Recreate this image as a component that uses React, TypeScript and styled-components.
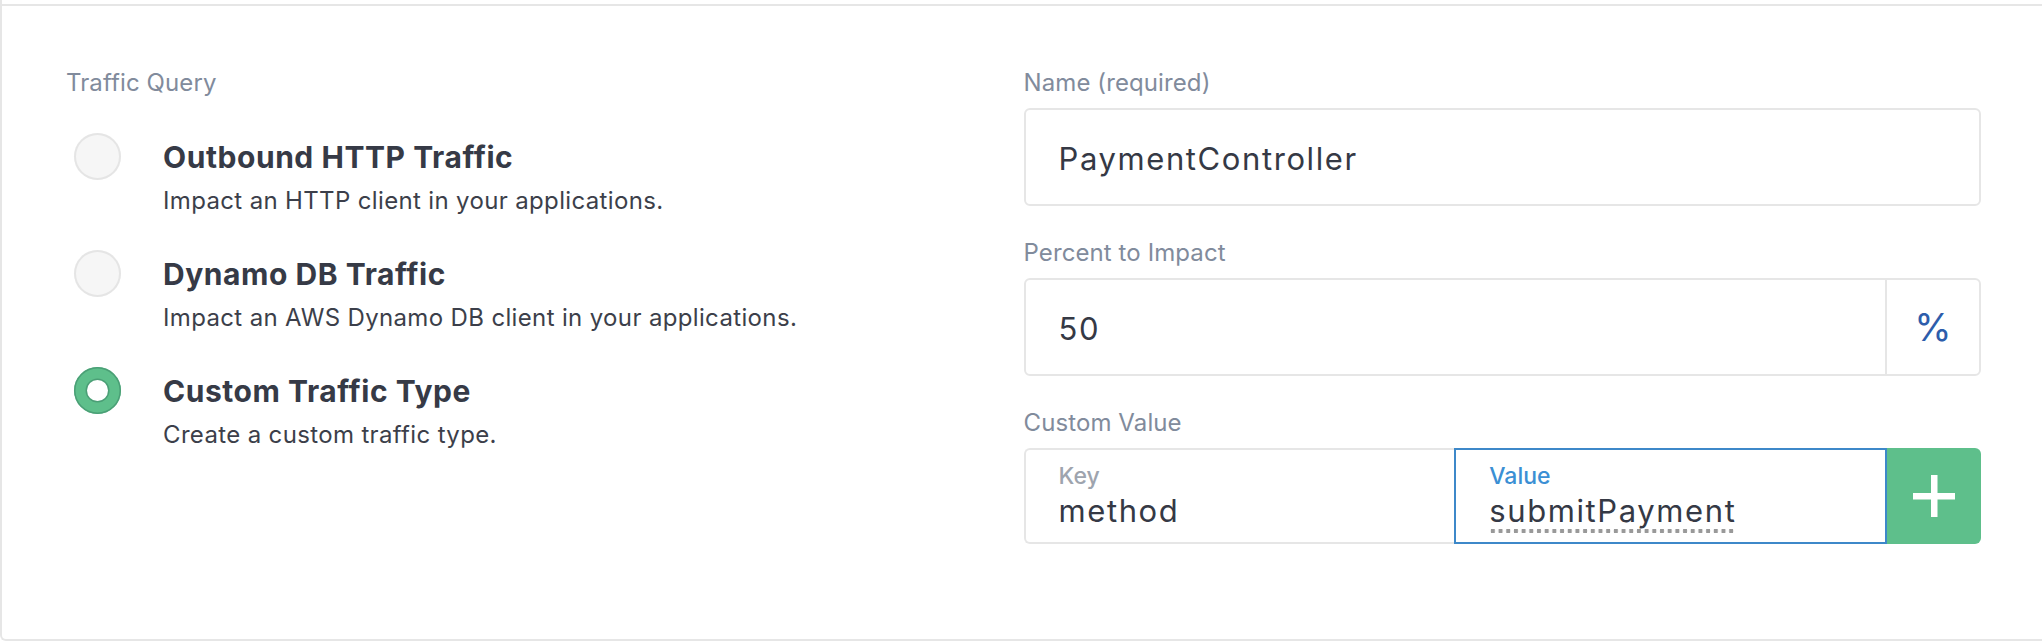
import React from "react";
import styled, { createGlobalStyle } from "styled-components";

const GlobalStyle = createGlobalStyle`
  html, body {
    margin: 0;
    padding: 0;
    background: #ffffff;
    overflow: hidden;
  }
  body {
    font-family: Inter, "Noto Sans", "Liberation Sans", sans-serif;
    color: #363a46;
  }
  * { box-sizing: border-box; }
`;

const Card = styled.div`
  height: 641px;
  padding-top: 4px;
  border-left: 2px solid #e6e6e6;
  border-bottom: 2px solid #e6e6e6;
  border-bottom-left-radius: 6px;
`;

const Section = styled.section`
  border-top: 2px solid #e6e6e6;
  display: grid;
  grid-template-columns: 1fr 1fr;
  padding: 62px 61px 0 64px;
`;

const Column = styled.div`
  display: flex;
  flex-direction: column;
`;

const FieldLabel = styled.div`
  font-size: 24px;
  line-height: 30px;
  color: #818b9c;
  font-weight: 400;
  letter-spacing: 0.1px;
`;

const OptionList = styled.div`
  display: flex;
  flex-direction: column;
  gap: 34px;
  margin-top: 35px;
  padding-left: 8px;
`;

const Option = styled.div`
  display: flex;
  align-items: flex-start;
  gap: 42px;
`;

const Radio = styled.div<{ $checked?: boolean }>`
  flex: none;
  width: 47px;
  height: 47px;
  border-radius: 50%;
  display: flex;
  align-items: center;
  justify-content: center;
  background: ${(p) => (p.$checked ? "#5ebf8b" : "#f6f6f6")};
  box-shadow: inset 0 0 0 ${(p) => (p.$checked ? "1.5px #4b9f76" : "2px #e5e5e5")};
  &::after {
    content: "";
    display: ${(p) => (p.$checked ? "block" : "none")};
    width: 21px;
    height: 21px;
    border-radius: 50%;
    background: #ffffff;
    box-shadow: 0 0 0 1.5px #4b9f76;
  }
`;

const OptionText = styled.div`
  display: flex;
  flex-direction: column;
`;

const OptionTitle = styled.div`
  font-size: 30px;
  line-height: 47px;
  padding-top: 1px;
  font-weight: 700;
  letter-spacing: 0.55px;
  color: #363a46;
`;

const OptionDesc = styled.div`
  margin-top: 5px;
  font-size: 24px;
  line-height: 30px;
  letter-spacing: 0.35px;
  color: #3c3f4a;
`;

const FieldGroup = styled.div`
  display: flex;
  flex-direction: column;
  gap: 10px;
  & + & {
    margin-top: 32px;
  }
`;

const InputBox = styled.div`
  display: flex;
  height: 98px;
  border: 2px solid #e6e6e6;
  border-radius: 6px;
  background: #ffffff;
`;

const InputText = styled.div`
  flex: 1;
  display: flex;
  align-items: center;
  padding: 3px 33px 0;
  font-size: 31px;
  line-height: 36px;
  letter-spacing: 1.6px;
  color: #353945;
`;

const Addon = styled.div`
  flex: none;
  width: 94px;
  display: flex;
  align-items: center;
  justify-content: center;
  border-left: 2px solid #e6e6e6;
  font-size: 38px;
  color: #2d5dab;
`;

const KVRow = styled.div`
  display: flex;
  height: 96px;
`;

const KVCell = styled.div<{ $focused?: boolean; $first?: boolean }>`
  flex: 1;
  display: flex;
  flex-direction: column;
  padding: 12px 33px 0;
  border: 2px solid ${(p) => (p.$focused ? "#3d88c9" : "#e6e6e6")};
  border-right: ${(p) => (p.$first ? "none" : undefined)};
  border-radius: ${(p) => (p.$first ? "6px 0 0 6px" : "0")};
`;

const CellLabel = styled.div<{ $focused?: boolean }>`
  font-size: 23px;
  line-height: 28px;
  font-weight: 500;
  color: ${(p) => (p.$focused ? "#3b8fd4" : "#9ea4ae")};
`;

const CellValue = styled.div`
  margin-top: 3px;
  height: 36px;
  font-size: 31px;
  line-height: 36px;
  letter-spacing: 1.6px;
  color: #353945;
`;

const Misspelled = styled.span`
  display: inline-block;
  padding-bottom: 7px;
  margin-bottom: -7px;
  background-image: radial-gradient(circle at 50% 50%, #999999 0, #999999 2.1px, transparent 2.5px);
  background-size: 7.7px 6px;
  background-repeat: repeat-x;
  background-position: 0 35px;
`;

const AddButton = styled.button`
  flex: none;
  width: 94px;
  border: none;
  padding: 0;
  margin: 0;
  background: #5ebf8b;
  border-radius: 0 6px 6px 0;
  display: flex;
  align-items: center;
  justify-content: center;
  cursor: pointer;
`;

const PlusIcon = () => (
  <svg width="42" height="42" viewBox="0 0 42 42" aria-hidden="true">
    <rect x="0" y="18" width="42" height="6.5" fill="#ffffff" />
    <rect x="18" y="0" width="6.5" height="42" fill="#ffffff" />
  </svg>
);

const options = [
  { title: "Outbound HTTP Traffic", desc: "Impact an HTTP client in your applications.", checked: false },
  { title: "Dynamo DB Traffic", desc: "Impact an AWS Dynamo DB client in your applications.", checked: false },
  { title: "Custom Traffic Type", desc: "Create a custom traffic type.", checked: true },
];

export default function App() {
  return (
    <>
      <GlobalStyle />
      <Card>
        <Section>
          <Column>
            <FieldLabel>Traffic Query</FieldLabel>
            <OptionList>
              {options.map((o) => (
                <Option key={o.title}>
                  <Radio $checked={o.checked} />
                  <OptionText>
                    <OptionTitle>{o.title}</OptionTitle>
                    <OptionDesc>{o.desc}</OptionDesc>
                  </OptionText>
                </Option>
              ))}
            </OptionList>
          </Column>
          <Column>
            <FieldGroup>
              <FieldLabel>Name (required)</FieldLabel>
              <InputBox>
                <InputText>PaymentController</InputText>
              </InputBox>
            </FieldGroup>
            <FieldGroup>
              <FieldLabel>Percent to Impact</FieldLabel>
              <InputBox>
                <InputText>50</InputText>
                <Addon>%</Addon>
              </InputBox>
            </FieldGroup>
            <FieldGroup>
              <FieldLabel>Custom Value</FieldLabel>
              <KVRow>
                <KVCell $first>
                  <CellLabel>Key</CellLabel>
                  <CellValue>method</CellValue>
                </KVCell>
                <KVCell $focused>
                  <CellLabel $focused>Value</CellLabel>
                  <CellValue>
                    <Misspelled>submitPayment</Misspelled>
                  </CellValue>
                </KVCell>
                <AddButton aria-label="Add">
                  <PlusIcon />
                </AddButton>
              </KVRow>
            </FieldGroup>
          </Column>
        </Section>
      </Card>
    </>
  );
}
